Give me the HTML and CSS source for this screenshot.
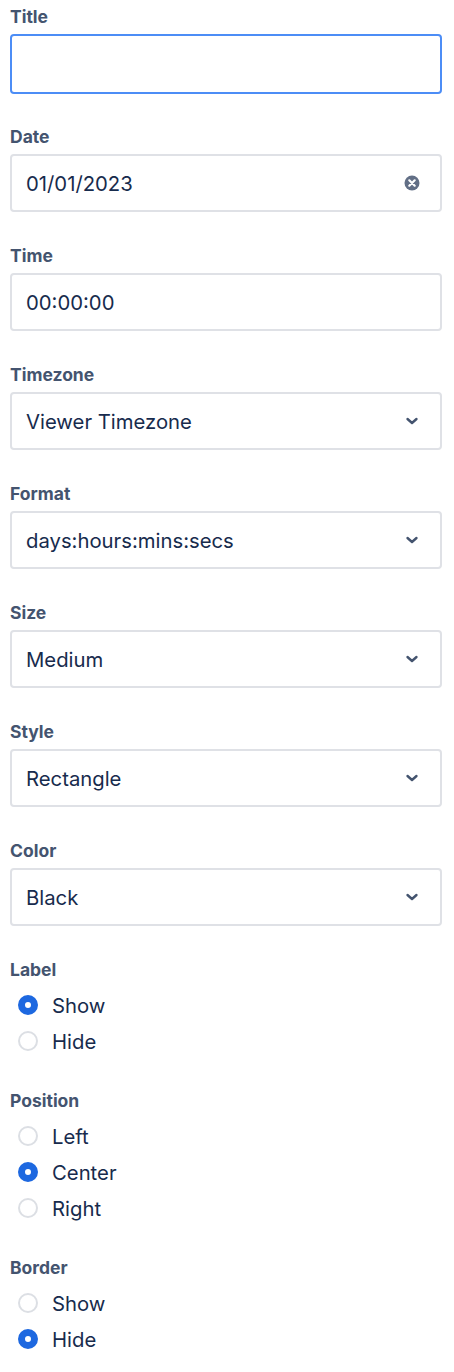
FILE: index.html
```html
<!DOCTYPE html>
<html>
<head>
<meta charset="utf-8">
<link rel="stylesheet" href="styles.css">
</head>
<body>
<div class="form">
  <div class="field first">
    <div class="label">Title</div>
    <div class="box focused"></div>
  </div>
  <div class="field">
    <div class="label">Date</div>
    <div class="box"><span>01/01/2023</span>
      <svg class="icon" width="24" height="24" viewBox="0 0 24 24"><circle cx="12" cy="12" r="7.5" fill="#626F86"/><path d="M9.3 9.3l5.4 5.4M14.7 9.3l-5.4 5.4" stroke="#fff" stroke-width="2.2" stroke-linecap="round"/></svg>
    </div>
  </div>
  <div class="field">
    <div class="label">Time</div>
    <div class="box"><span>00:00:00</span></div>
  </div>
  <div class="field">
    <div class="label">Timezone</div>
    <div class="box"><span>Viewer Timezone</span>
      <svg class="icon" width="24" height="24" viewBox="0 0 24 24"><path d="M7.5 10l4.5 4 4.5-4" fill="none" stroke="#44546F" stroke-width="2.4" stroke-linecap="round" stroke-linejoin="round"/></svg>
    </div>
  </div>
  <div class="field">
    <div class="label">Format</div>
    <div class="box"><span>days:hours:mins:secs</span>
      <svg class="icon" width="24" height="24" viewBox="0 0 24 24"><path d="M7.5 10l4.5 4 4.5-4" fill="none" stroke="#44546F" stroke-width="2.4" stroke-linecap="round" stroke-linejoin="round"/></svg>
    </div>
  </div>
  <div class="field">
    <div class="label">Size</div>
    <div class="box"><span>Medium</span>
      <svg class="icon" width="24" height="24" viewBox="0 0 24 24"><path d="M7.5 10l4.5 4 4.5-4" fill="none" stroke="#44546F" stroke-width="2.4" stroke-linecap="round" stroke-linejoin="round"/></svg>
    </div>
  </div>
  <div class="field">
    <div class="label">Style</div>
    <div class="box"><span>Rectangle</span>
      <svg class="icon" width="24" height="24" viewBox="0 0 24 24"><path d="M7.5 10l4.5 4 4.5-4" fill="none" stroke="#44546F" stroke-width="2.4" stroke-linecap="round" stroke-linejoin="round"/></svg>
    </div>
  </div>
  <div class="field">
    <div class="label">Color</div>
    <div class="box"><span>Black</span>
      <svg class="icon" width="24" height="24" viewBox="0 0 24 24"><path d="M7.5 10l4.5 4 4.5-4" fill="none" stroke="#44546F" stroke-width="2.4" stroke-linecap="round" stroke-linejoin="round"/></svg>
    </div>
  </div>
  <div class="field radios">
    <div class="label">Label</div>
    <div class="radio"><span class="dot on"></span><span>Show</span></div>
    <div class="radio"><span class="dot"></span><span>Hide</span></div>
  </div>
  <div class="field radios">
    <div class="label">Position</div>
    <div class="radio"><span class="dot"></span><span>Left</span></div>
    <div class="radio"><span class="dot on"></span><span>Center</span></div>
    <div class="radio"><span class="dot"></span><span>Right</span></div>
  </div>
  <div class="field radios">
    <div class="label">Border</div>
    <div class="radio"><span class="dot"></span><span>Show</span></div>
    <div class="radio"><span class="dot on"></span><span>Hide</span></div>
  </div>
</div>
</body>
</html>
```
FILE: styles.css
```css
html, body {
  margin: 0;
  padding: 0;
  background: #fff;
}
.form {
  width: 432px;
  padding: 6px 0 0 10px;
  font-family: Inter, "Liberation Sans", sans-serif;
}
.field {
  margin-bottom: 33px;
}
.field.first {
  margin-bottom: 32px;
}
.label {
  font-size: 17.5px;
  line-height: 22px;
  font-weight: 700;
  color: #44546F;
  margin-bottom: 6px;
}
.box {
  box-sizing: border-box;
  height: 58px;
  border: 2px solid #DFE1E6;
  border-radius: 4px;
  background: #fff;
  display: flex;
  align-items: center;
  justify-content: space-between;
  padding: 0 16px 0 14px;
  font-size: 20.3px;
  color: #172B4D;
}
.box.focused {
  height: 60px;
  border-color: #4C8DF6;
}
.icon {
  display: block;
  flex: none;
}
.radios {
  margin-bottom: 31px;
}
.radio {
  height: 36px;
  display: flex;
  align-items: center;
  gap: 14px;
  padding-left: 8px;
  font-size: 20.3px;
  color: #172B4D;
}
.dot {
  box-sizing: border-box;
  width: 20px;
  height: 20px;
  border-radius: 50%;
  border: 2px solid #DCDFE4;
  background: #fff;
  flex: none;
}
.dot.on {
  border: 7px solid #1D68E0;
}
```
